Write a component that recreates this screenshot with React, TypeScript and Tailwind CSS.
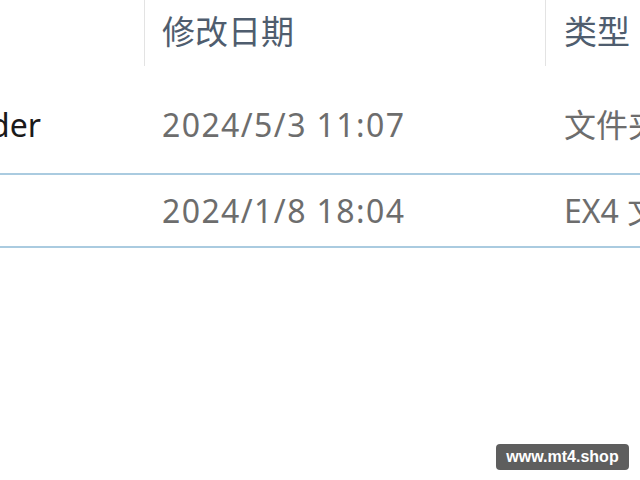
const font = { fontFamily: '"Noto Sans", "Noto Sans CJK SC", sans-serif' };

export default function App() {
  return (
    <div className="relative h-[480px] w-[640px] overflow-hidden bg-white" style={font}>
      {/* column headers */}
      <div className="flex h-[89px] items-start text-[33px] leading-none text-[#4f5d6e]">
        <div className="h-[66px] w-[145px] shrink-0 border-r border-[#e3e3e3]" />
        <div className="flex h-[66px] w-[401px] shrink-0 items-center border-r border-[#e3e3e3] pb-[4px] pl-[17px]">
          修改日期
        </div>
        <div className="flex h-[66px] flex-1 items-center pb-[4px] pl-[18px] whitespace-nowrap">类型</div>
      </div>

      {/* folder row */}
      <div className="flex h-[84px] items-center pb-[12px] text-[32px] leading-none text-[#6d6d6d] whitespace-nowrap">
        <div className="flex w-[145px] shrink-0">
          <div className="flex w-[41px] justify-end overflow-hidden text-[#1a1a1a]">Folder</div>
        </div>
        <div className="w-[401px] shrink-0 pl-[17px] tracking-[1.4px]">2024/5/3 11:07</div>
        <div className="flex-1 overflow-hidden pl-[18px]">文件夹</div>
      </div>

      {/* focused row */}
      <div className="flex h-[75px] items-center border-y-2 border-[#aacbe0] text-[32px] leading-none text-[#6d6d6d] whitespace-nowrap">
        <div className="w-[145px] shrink-0" />
        <div className="w-[401px] shrink-0 pl-[17px] tracking-[1.4px]">2024/1/8 18:04</div>
        <div className="flex-1 overflow-hidden pl-[18px]">EX4 文件</div>
      </div>

      {/* watermark */}
      <div
        className="absolute left-[496px] top-[444px] flex h-[26px] w-[133px] items-center justify-center rounded-[4px] bg-[#5e5e5e] text-[16px] font-bold text-white"
        style={{ fontFamily: '"Liberation Sans", Arial, sans-serif' }}
      >
        www.mt4.shop
      </div>
    </div>
  );
}
